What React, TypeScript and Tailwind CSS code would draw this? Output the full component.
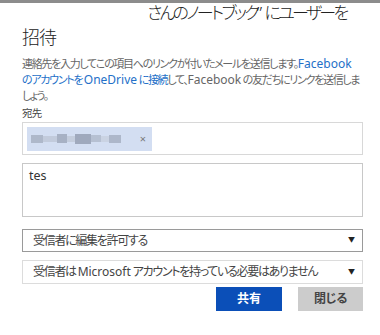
const font = { fontFamily: '"Noto Sans", "Noto Sans CJK JP", sans-serif' }

// narrow Japanese run (Meiryo UI style proportional kana)
function J({ children, className = '' }: { children: React.ReactNode; className?: string }) {
  return <span className={`tracking-[-1.3px] [font-feature-settings:'palt'] ${className}`}>{children}</span>
}

function Select({ children, dark }: { children: React.ReactNode; dark?: boolean }) {
  return (
    <div
      className={`flex items-center justify-between border bg-white pl-[10px] pr-[7px] ${
        dark ? 'h-[23px] border-[#9a9a9a]' : 'h-[24px] border-[#dcdcdc]'
      }`}
    >
      <span className="text-[12px] text-[#444] whitespace-nowrap">{children}</span>
      <span className="text-[7px] text-[#222]">▼</span>
    </div>
  )
}

export default function App() {
  return (
    <div className="w-[380px] h-[335px] bg-white border-t-[3px] border-[#8c8c8c] overflow-hidden" style={font}>
      <div className="pl-[22px] pr-[17px]">
        <h1 className="-mt-[2px] text-[18px] font-light leading-[24px] text-[#222] [font-feature-settings:'palt']">
          <div className="pl-[125px] whitespace-nowrap text-[17px] tracking-[-2.7px]">
            さんのノートブック”<span className="ml-[5px]">にユーザーを</span>
          </div>
          <div className="tracking-[-1px]">招待</div>
        </h1>

        <p className="mt-[7px] text-[11px] leading-[16px] text-[#666] whitespace-nowrap">
          <J>連絡先を入力してこの項目へのリンクが付いたメールを送信します。</J>
          <span className="text-[#2470c8] text-[12px]">Facebook</span>
          <br />
          <span className="text-[#2470c8]">
            <J>のアカウントを </J>
            <span className="text-[12px]">OneDrive</span>
            <J> に接続</J>
          </span>
          <J>して、</J>
          <span className="text-[12px]">Facebook</span>
          <J> の友だちにリンクを送信しま</J>
          <br />
          <J>しょう。</J>
        </p>

        <div className="mt-[3px] text-[10.5px] leading-[13px] text-[#444] tracking-[-0.8px]">宛先</div>

        <div className="mt-[2px] h-[33px] border border-[#d8d8d8] flex items-center pl-[4px]">
          <div className="flex items-center h-[24px] w-[125px] bg-[#d3def2] pl-[4px]">
            <div className="flex items-center">
              <span className="block w-[12px] h-[8px] bg-[#aeb8ca]" />
              <span className="block w-[14px] h-[6px] bg-[#c2cbdc]" />
              <span className="block w-[10px] h-[9px] bg-[#a7b1c4]" />
              <span className="block w-[8px] h-[6px] bg-[#c4cddd]" />
              <span className="block w-[16px] h-[10px] bg-[#9fa9bd]" />
              <span className="block w-[10px] h-[7px] bg-[#b6c0d2]" />
              <span className="block w-[8px] h-[6px] bg-[#cad3e3]" />
              <span className="block w-[12px] h-[8px] bg-[#adb7ca]" />
            </div>
            <span className="ml-auto mr-[6px] text-[11px] leading-none text-[#7a7a7a]">×</span>
          </div>
        </div>

        <div className="mt-[8px] h-[54px] border border-[#c8c8c8] px-[6px] pt-[4px] text-[12.5px] leading-[16px] text-[#333]">
          tes
        </div>

        <div className="mt-[12px] flex flex-col gap-[8px]">
          <Select dark>
            <J>受信者に編集を許可する</J>
          </Select>
          <Select>
            <J>受信者は </J>Microsoft<J> アカウントを持っている必要はありません</J>
          </Select>
        </div>

        <div className="mt-[3px] flex justify-end gap-[16px]">
          <button className="w-[66px] h-[24px] bg-[#0b4fb8] text-white text-[12px] font-bold">共有</button>
          <button className="w-[65px] h-[24px] bg-[#cccccc] text-[#444] text-[12px] font-bold tracking-[-1px]">
            閉じる
          </button>
        </div>
      </div>
    </div>
  )
}
